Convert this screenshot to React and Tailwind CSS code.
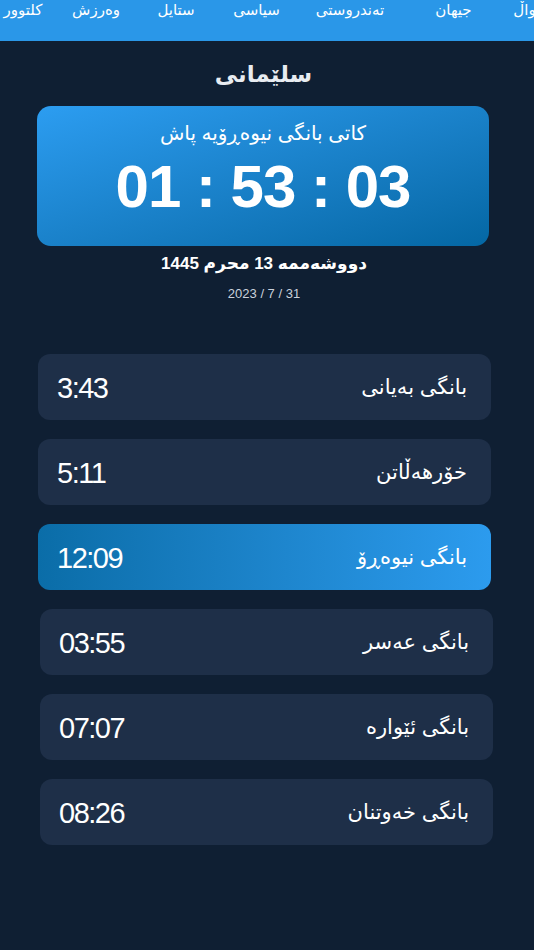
import React from 'react'

const navItems = [
  { label: 'کلتوور', cls: 'ml-[3px] w-[40px]' },
  { label: 'وەرزش', cls: 'ml-[35px] w-[42px]' },
  { label: 'ستایل', cls: 'ml-[35px] w-[42px]' },
  { label: 'سیاسی', cls: 'ml-[36px] w-[47px]' },
  { label: 'تەندروستی', cls: 'ml-[32px] w-[76px]' },
  { label: 'جیهان', cls: 'ml-[44px] w-[43px]' },
  { label: 'هەواڵ', cls: 'ml-[35px] w-[45px]' },
]

const prayers = [
  { label: 'بانگی بەیانی', time: '3:43', shift: 'ml-[38px] mr-[43px]' },
  { label: 'خۆرهەڵاتن', time: '5:11', shift: 'ml-[38px] mr-[43px]' },
  { label: 'بانگی نیوەڕۆ', time: '12:09', shift: 'ml-[38px] mr-[43px]', active: true },
  { label: 'بانگی عەسر', time: '03:55', shift: 'ml-[40px] mr-[41px]' },
  { label: 'بانگی ئێوارە', time: '07:07', shift: 'ml-[40px] mr-[41px]' },
  { label: 'بانگی خەوتنان', time: '08:26', shift: 'ml-[40px] mr-[41px]' },
]

function NavBar() {
  return (
    <nav className="h-[41px] bg-[#2a97e8] overflow-hidden">
      <div className="flex items-start whitespace-nowrap">
        {navItems.map((item) => (
          <span
            key={item.label}
            dir="rtl"
            className={`${item.cls} shrink-0 text-center text-[15px] text-white leading-[19px]`}
          >
            {item.label}
          </span>
        ))}
      </div>
    </nav>
  )
}

function Countdown() {
  return (
    <div className="ml-[37px] mr-[45px] h-[140px] rounded-[14px] bg-linear-to-br from-[#2c9df1] to-[#0467a4] flex flex-col items-center pt-[13px]">
      <div dir="rtl" className="text-[20px] text-white leading-[28px]">
        کاتی بانگی نیوەڕۆیە پاش
      </div>
      <div className="mt-[6px] text-[60px] font-bold text-white leading-[68px] tracking-[-1px]">
        01 : 53 : 03
      </div>
    </div>
  )
}

function PrayerRow({ label, time, shift, active }) {
  return (
    <div
      className={`${shift} h-[66px] rounded-[12px] flex items-center justify-between pl-[19px] pr-[24px] ${
        active
          ? 'bg-linear-to-r from-[#0a6da8] to-[#2c9bee]'
          : 'bg-[#1e2f48]'
      }`}
    >
      <span className="pt-[3px] text-[29px] text-white tracking-[-1.5px] leading-none">
        {time}
      </span>
      <span dir="rtl" className="pb-[2px] text-[21px] text-white leading-none">
        {label}
      </span>
    </div>
  )
}

export default function App() {
  return (
    <div
      className="min-h-[950px] bg-[#0f1f33] text-white"
      style={{ fontFamily: '"Liberation Sans", "DejaVu Sans", sans-serif' }}
    >
      <NavBar />

      <h1
        dir="rtl"
        className="mt-[19px] text-center text-[23px] font-bold text-[#e8ecf1] leading-[28px] pr-[7px]"
      >
        سلێمانی
      </h1>

      <div className="mt-[18px]">
        <Countdown />
      </div>

      <div
        dir="rtl"
        className="mt-[8px] text-center text-[17px] font-bold text-white leading-[20px] pr-[6px]"
      >
        دووشەممە 13 محرم 1445
      </div>
      <div className="mt-[12px] text-center text-[13px] text-[#c9d1dc] leading-[16px] pr-[6px]">
        2023 / 7 / 31
      </div>

      <div className="mt-[52px] flex flex-col gap-[19px]">
        {prayers.map((p) => (
          <PrayerRow key={p.label} {...p} />
        ))}
      </div>
    </div>
  )
}
